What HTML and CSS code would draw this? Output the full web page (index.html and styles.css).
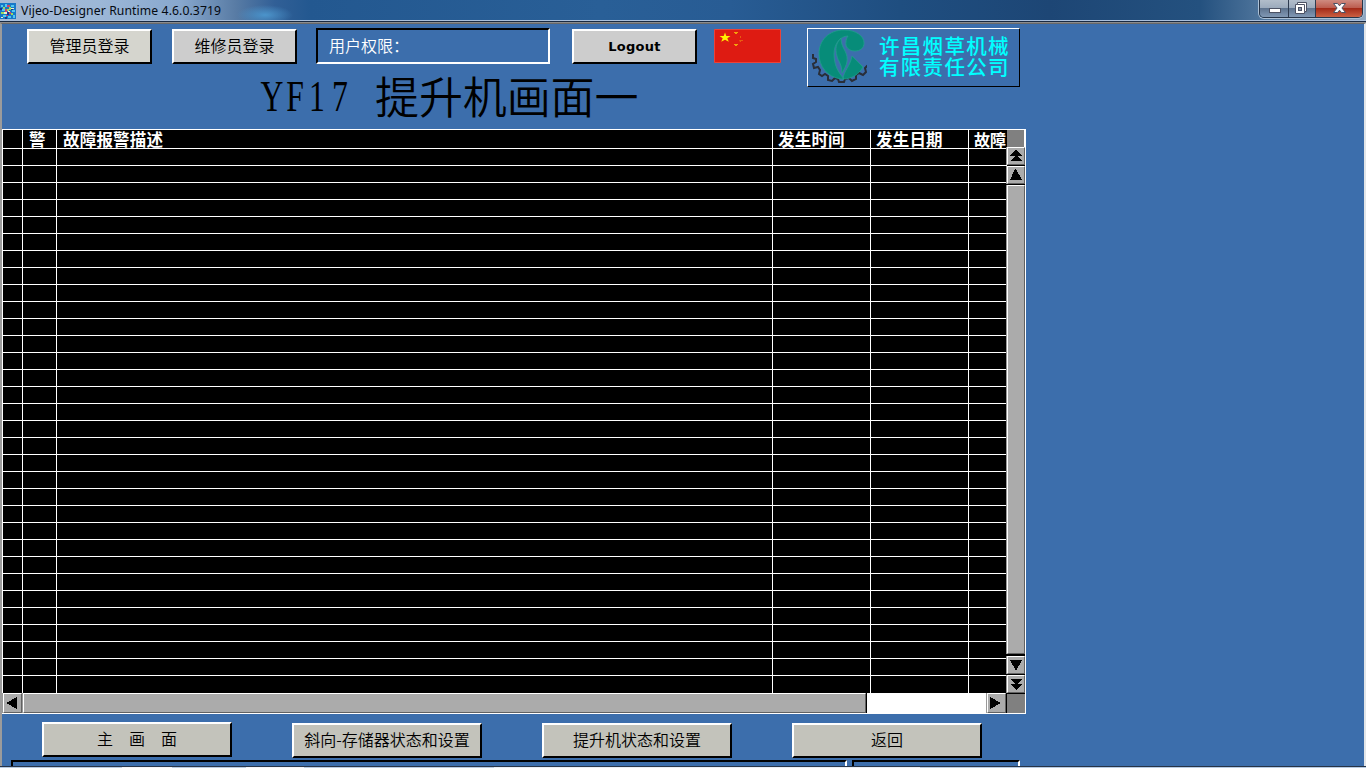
FILE: index.html
```html
<!DOCTYPE html>
<html lang="zh-CN">
<head>
<meta charset="utf-8">
<title>Vijeo-Designer Runtime 4.6.0.3719</title>
<link rel="stylesheet" href="styles.css">
</head>
<body>
<div class="window">
  <header class="titlebar">
    <svg class="app-icon" width="16" height="16" viewBox="0 0 16 16" shape-rendering="crispEdges">
      <path fill="#1878c8" d="M0 0h16v16H0z"/>
      <path fill="#50c8f0" d="M1 2h2v2H1zM5 1h2v3H5zM2 6h3v2H2zM11 2h3v2h-3zM12 7h3v2h-3zM3 12h3v2H3zM8 13h3v2H8zM13 12h2v3h-2z"/>
      <path fill="#9cd860" d="M3 4h2v2H3zM9 4h2v3H9zM1 9h3v2H1zM11 10h2v2h-2zM7 6h2v2H7z"/>
      <path fill="#d04068" d="M7 2h3v2H7zM5 6h2v3H5zM9 9h2v2H9zM6 12h2v1H6z"/>
      <path fill="#e8f0d0" d="M4 9h3v2H4zM11 5h3v1h-3zM1 14h2v1H1zM8 8h2v1H8z"/>
      <path fill="#183890" d="M7 9h2v3H7zM11 6h2v1h-2zM0 5h2v2H0zM5 14h2v2H5z"/>
    </svg>
    <span class="caption">Vijeo-Designer Runtime 4.6.0.3719</span>
    <div class="controls">
      <span class="ctl ctl-min"><svg width="28" height="17"><rect x="9.5" y="8.500" width="11" height="4" fill="#fff" stroke="#4c5264"/></svg></span>
      <span class="ctl ctl-max"><svg width="26" height="17"><path d="M8.500 2.500h9v9h-2v2h-9v-9h2z" fill="#fff" stroke="#4c5264"/><path d="M8.500 4.500h7v7" fill="none" stroke="#4c5264"/><rect x="9.500" y="7.500" width="3" height="3" fill="#8794a8" stroke="#4c5264"/></svg></span>
      <span class="ctl ctl-close"><svg width="46" height="17"><path d="M17.500 3.500h4l2 2.300 2-2.300h4l-3.600 4.500 3.600 4.500h-4l-2-2.300-2 2.300h-4l3.600-4.500z" fill="#fff" stroke="#4c5264"/></svg></span>
    </div>
  </header>
  <main class="panel">
    <div class="toolbar">
      <button class="btn btn-warm">管理员登录</button>
      <button class="btn btn-repair">维修员登录</button>
      <div class="field">用户权限：</div>
      <button class="btn btn-logout">Logout</button>
      <svg class="flag" width="67" height="34" viewBox="0 0 67 34">
        <path fill="#de1b12" stroke="#ec4238" d="M.5.5h66v33H.5z"/>
        <path fill="#fff000" d="M11 3.500l1.300 3.500h4.200l-3.200 2.200 1.500 3.500-3.800-2-3.800 2L8.700 9.200 5.500 7h4.200z"/>
        <path fill="#f3a00c" d="M20 3h4v1h-1v1h-2V4h-1zM20 15h4v1h-1v1h-2v-1h-1z"/>
        <path fill="#e95c11" d="M26 7h1v2h-1zM25 11h4v1h-2v1h-1z"/>
      </svg>
      <div class="brand">
        <svg class="emblem" width="56" height="57" viewBox="0 0 56 57">
          <path d="M2 25v4l3 1v3l-3 2 1 4 4-1 2 3-1 4 3 2 3-2 3 2v4l4 1 3-3 3 1 1 3h5l1-3 4-1 3 3 4-2v-4l3-2 4 2 3-3-1-4 2-2 2 1 1-3-1-4" fill="none" stroke="#292e38" stroke-width="2"/>
          <path fill="#078c79" stroke="#20a08c" stroke-width=".8" d="M30 50C16 48 8 37 8 25 8 11 18 1 33 1c12 0 20 6 20 13 0 5-4 8-9 8-6 0-10-4-9-9 0-3 1-4 2-6-8 0-14 8-14 18 0 11 4 18 10 25zM30 9c-5 5-6 11-4 18 1 5 5 8 5 17 5-8 7-14 3-22-2-4-4-7-4-13zM41 27l11 11c-4 7-11 12-20 12 1-9 7-12 9-23z"/>
        </svg>
        <div class="company"><span>许昌烟草机械</span><span>有限责任公司</span></div>
      </div>
    </div>
    <h1 class="heading"><span class="code"><i>Y</i><i>F</i><i>1</i><i>7</i></span><span class="name">提升机画面一</span></h1>
    <section class="alarm">
      <div class="grid">
        <div class="row head"><b></b><b>警</b><b>故障报警描述</b><b>发生时间</b><b>发生日期</b><b>故障</b></div>
        <div class="rows" id="rows"></div>
      </div>
      <div class="vscroll">
        <div class="corner-top"></div>
        <div class="sbtn"><svg width="15" height="15" shape-rendering="crispEdges"><path d="M7 2h1l6 6H9l5 5H2l5-5H1z"/></svg></div>
        <div class="sbtn"><svg width="15" height="15" shape-rendering="crispEdges"><path d="M7 2h1l6 11H2z"/></svg></div>
        <div class="vthumb"></div>
        <div class="sbtn"><svg width="15" height="15" shape-rendering="crispEdges"><path d="M2 3h12L8 14z"/></svg></div>
        <div class="sbtn"><svg width="15" height="15" shape-rendering="crispEdges"><path d="M2 3h12L9 8h5l-6 6-6-6h5z"/></svg></div>
      </div>
      <div class="hscroll">
        <div class="hbtn"><svg width="16" height="15" shape-rendering="crispEdges"><path d="M3 8l11-6v12z"/></svg></div>
        <div class="hthumb"></div>
        <div class="track"></div>
        <div class="hbtn"><svg width="16" height="15" shape-rendering="crispEdges"><path d="M14 8L3 2v12z"/></svg></div>
      </div>
      <div class="corner"></div>
    </section>
    <nav class="nav">
      <button class="btn btn-home">主　画　面</button>
      <button class="btn">斜向-存储器状态和设置</button>
      <button class="btn">提升机状态和设置</button>
      <button class="btn">返回</button>
    </nav>
    <div class="frames"><div class="frame frame-a"></div><div class="frame frame-b"></div></div>
  </main>
  <div class="bottom-edge"></div>
</div>
<script src="rows.js"></script>
</body>
</html>
```
FILE: styles.css
```css
* { box-sizing: border-box; }
body { margin: 0; background: #3c6eac; overflow: hidden; }
.window {
  width: 1366px; height: 768px; display: flex; flex-direction: column;
  font-family: "Noto Sans CJK SC", sans-serif; font-size: 16px; color: #000;
}
svg { display: block; }
.titlebar {
  height: 23px; flex: none; display: flex; align-items: flex-start;
  background:
    radial-gradient(ellipse 28px 10px at 265px 15px, #4b94cb 0, rgba(75,148,203,0) 100%),
    linear-gradient(90deg, #a5b9d5 0, #9cb7d7 100px, #88a8ce 180px, #597ca5 235px, #315f96 275px, #235890 310px, #295f97 600px, #285c94 730px, #1f4e80 900px, #1d4675 1050px, #24517f 1200px, #4f759c 1262px, #91a8c2 1366px);
  border-bottom: 1px solid #8b8c8e;
  box-shadow: inset 0 -1px #172942, inset 0 -2px #a9bfdb;
}
.app-icon { margin: 3px 0 0; }
.caption { margin-left: 5px; font: 12.2px/22px "Noto Sans", sans-serif; width: 204px; letter-spacing: .1px; white-space: nowrap; color: #050a12; }
.controls {
  margin-left: auto; margin-right: 3px; height: 18px; display: flex;
  border: 1px solid #263549; border-top: 0; border-radius: 0 0 5px 5px;
  box-shadow: 0 0 0 1px #adc1d6; overflow: hidden;
}
.ctl { border-right: 1px solid #2e3b50; background: linear-gradient(#b2bdca 0, #9cabbd 45%, #5f748f 50%, #8198b4 100%); }
.ctl-close { border-right: 0; background: linear-gradient(#cf8b80 0, #bd5e50 45%, #a42b19 50%, #cb6042 100%); }
.panel {
  flex: 1; min-height: 0; display: flex; flex-direction: column; background: #3c6eac;
  border-left: 2px solid #9b9b9b; border-right: 2px solid #e2e5e8; border-top: 1px solid #696969;
}
.toolbar { display: flex; align-items: flex-start; padding: 4px 0 0 25px; height: 49px; flex: none; }
.btn {
  width: 125px; height: 35px; padding: 0 0 3px; margin: 1px 0 0; flex: none;
  border: 2px solid; border-color: #fff #000 #000 #fff; background: #cdcdcd;
  font: 16px/28px "Noto Sans CJK SC", sans-serif; font-weight: 350; color: #000; text-align: center; white-space: nowrap;
}
.btn-warm { background: #d5d5ce; }
.btn-repair { margin-left: 20px; }
.btn-logout { margin-left: 22px; padding-bottom: 0; font: bold 13px/30px "DejaVu Sans", sans-serif; letter-spacing: .25px; }
.field {
  width: 234px; height: 36px; margin-left: 19px; padding-left: 11px;
  border: 2px solid; border-color: #000 #fff #fff #000; color: #fff; font-weight: 350; line-height: 30px;
}
.flag { margin: 1px 0 0 17px; flex: none; }
.brand {
  width: 213px; height: 59px; margin-left: 26px; flex: none; display: flex;
  border: 1px solid; border-color: #fff #000 #000 #fff;
}
.emblem { margin-left: 3px; flex: none; }
.company { margin: 6px 0 0 12px; color: #00ffff; font-size: 20.5px; line-height: 21px; font-weight: 500; letter-spacing: 1.3px; white-space: nowrap; }
.company span { display: block; }
.heading { height: 56px; margin: 0; flex: none; display: flex; padding-left: 259px; font-weight: 350; font-size: 44px; line-height: 44px; }
.code { display: flex; width: 114px; padding-top: 2px; font-family: "Liberation Serif", serif; font-weight: 400; }
.code i { width: 22px; margin-right: .5px; font-style: normal; display: flex; justify-content: center; transform: scaleX(.72); }
.name { white-space: nowrap; letter-spacing: -.1px; }
.alarm {
  width: 1024px; height: 585px; flex: none; display: grid;
  grid-template-columns: 1004px 18px; grid-template-rows: 563px 20px;
  border: 1px solid #fff; background: #000;
}
.grid { min-width: 0; }
.row { display: grid; grid-template-columns: 19px 34px 716px 98px 98px 39px; height: 17px; border-bottom: 1px solid #fff; }
.row > * { border-right: 1px solid #fff; }
.row > :first-child { margin-right: -1px; }
.row > :nth-child(n+2) { margin-right: -1px; }
.row > :last-child { border-right: 0; margin-right: 0; }
.rows .row:last-child { border-bottom: 0; }
.head { height: 19px; color: #fff; font-size: 16.5px; line-height: 18px; }
.head b { padding-left: 7px; white-space: nowrap; font-weight: 700; letter-spacing: .2px; }
.head b:nth-child(n+4) { padding-left: 6px; }
.head b:last-child { font-size: 16px; letter-spacing: 0; }
.vscroll { display: flex; flex-direction: column; background: #000; }
.corner-top { height: 17px; background: #808080; border-right: 1px solid #fff; }
.sbtn { height: 18px; margin-bottom: 1px; flex: none; }
.sbtn, .vthumb, .hbtn, .hthumb { background: #ababab; border: 1px solid; border-color: #fff #626262 #626262 #fff; box-shadow: -1px 0 #999; }
.vthumb { flex: 1; margin-bottom: 2px; }
.vscroll .sbtn:last-child { margin-bottom: 0; }
.hscroll { display: flex; background: #000; }
.hbtn { width: 19px; padding-top: 1px; }
.hbtn:last-child { margin-right: 1px; }
.hbtn svg { margin-left: -1px; }
.hthumb { width: 843px; margin-left: 1px; }
.track { flex: 1; margin-left: 1px; background: #fff; }
.corner { margin: 1px 0 0; background: #808080; }
.nav { display: flex; align-items: flex-start; gap: 60px; padding: 8px 0 0 40px; height: 46px; flex: none; }
.nav .btn { width: 190px; background: #c3c3bb; }
.nav .btn-home { margin-top: 0; }
.frames { display: flex; gap: 5px; padding-left: 9px; flex: 1; }
.frame { border: 2px solid; border-color: #000 #fff transparent #000; border-bottom: 0; }
.frame-a { width: 836px; }
.frame-b { width: 168px; }
.bottom-edge { height: 2px; flex: none; border-top: 1px solid #273447; background: linear-gradient(90deg, #b8cbe2 0 122px, #f3f5fa 122px 172px, #b8cbe2 172px 246px, #f3f5fa 246px 304px, #b8cbe2 304px 494px, #e8eef6 494px 920px, #b8cbe2 920px); }
```
FILE: rows.js
```js
const rows = document.getElementById('rows');
for (let i = 0; i < 32; i++) {
  const row = document.createElement('div');
  row.className = 'row';
  for (let c = 0; c < 6; c++) row.appendChild(document.createElement('span'));
  rows.appendChild(row);
}
```
